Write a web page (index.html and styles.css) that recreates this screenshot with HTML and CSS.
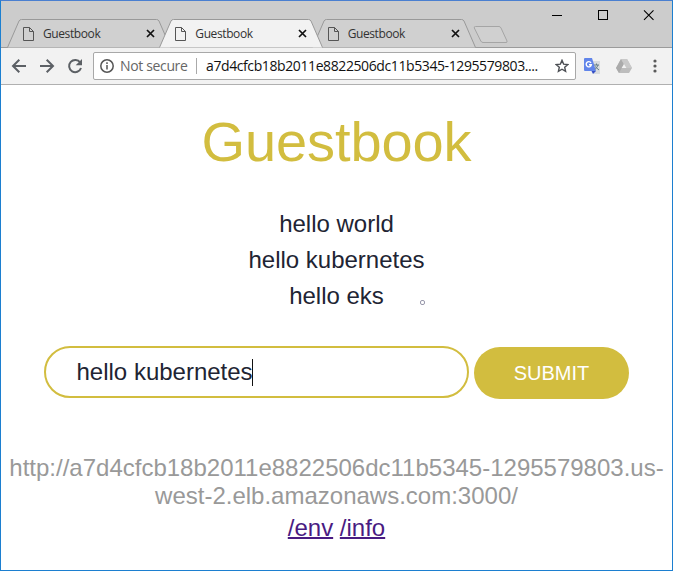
FILE: index.html
```html
<!DOCTYPE html>
<html lang="en">
<head>
<meta charset="utf-8">
<title>Guestbook</title>
<link rel="stylesheet" href="styles.css">
</head>
<body>
<div class="window">
  <header class="titlebar">
    <div class="tabs">
      <div class="tab">
        <svg class="tab-shape" width="166" height="29" viewBox="0 0 166 29"><path d="M0.5 28.5L12 2Q12.8.5 14.5.5H149.5Q151.2.5 152 2L163.5 28.5"/></svg>
        <svg class="page-icon" width="11" height="14" viewBox="0 0 11 14"><path d="M.5.5H6.5L10.5 4.5V13.5H.5ZM6.5.5V4.5H10.5"/></svg>
        <span class="tab-title">Guestbook</span>
        <svg class="tab-close" width="9" height="9" viewBox="0 0 9 9"><path d="M1 1L8 8M8 1L1 8"/></svg>
      </div>
      <div class="tab active">
        <svg class="tab-shape" width="166" height="29" viewBox="0 0 166 29"><path d="M0.5 28.5L12 2Q12.8.5 14.5.5H149.5Q151.2.5 152 2L163.5 28.5"/></svg>
        <svg class="page-icon" width="11" height="14" viewBox="0 0 11 14"><path d="M.5.5H6.5L10.5 4.5V13.5H.5ZM6.5.5V4.5H10.5"/></svg>
        <span class="tab-title">Guestbook</span>
        <svg class="tab-close" width="9" height="9" viewBox="0 0 9 9"><path d="M1 1L8 8M8 1L1 8"/></svg>
      </div>
      <div class="tab">
        <svg class="tab-shape" width="166" height="29" viewBox="0 0 166 29"><path d="M0.5 28.5L12 2Q12.8.5 14.5.5H149.5Q151.2.5 152 2L163.5 28.5"/></svg>
        <svg class="page-icon" width="11" height="14" viewBox="0 0 11 14"><path d="M.5.5H6.5L10.5 4.5V13.5H.5ZM6.5.5V4.5H10.5"/></svg>
        <span class="tab-title">Guestbook</span>
        <svg class="tab-close" width="9" height="9" viewBox="0 0 9 9"><path d="M1 1L8 8M8 1L1 8"/></svg>
      </div>
      <svg class="new-tab" width="36" height="18" viewBox="0 0 36 18"><path d="M2.5.5H26Q27.3.5 28 2L34 15Q34.5 16.5 33 16.5H10Q8.5 16.5 7.8 15L1.3 2Q.8.5 2.5.5Z"/></svg>
    </div>
    <svg class="window-controls" width="106" height="12" viewBox="0 0 106 12"><path d="M1 6.5H11M47.5 1.5H56.5V10.5H47.5Z" shape-rendering="crispEdges"/><path d="M93 1.3L102.5 10.8M102.5 1.3L93 10.8"/></svg>
  </header>
  <div class="toolbar">
    <svg class="nav-icon" width="16" height="16" viewBox="0 0 16 16"><path d="M15 8H2.5M8.3 1.7L2 8L8.3 14.3"/></svg>
    <svg class="nav-icon" width="16" height="16" viewBox="0 0 16 16"><path d="M1 8H13.5M7.7 1.7L14 8L7.7 14.3"/></svg>
    <svg class="nav-icon" width="16" height="16" viewBox="0 0 16 16"><path d="M13.2 4.5A6.1 6.1 0 1 0 14 10"/><path class="solid" d="M15 1V7.3H8.7Z"/></svg>
    <div class="address">
      <svg class="info" width="14" height="14" viewBox="0 0 14 14"><circle cx="7" cy="7" r="6.2"/><path d="M7 6V10.6M7 3.2V5"/></svg>
      <span class="security">Not secure</span>
      <span class="divider"></span>
      <span class="url">a7d4cfcb18b2011e8822506dc11b5345-1295579803....</span>
      <svg class="star" width="14" height="14" viewBox="0 0 14 14"><path d="M7 1.3L8.6 5.1L12.9 5.5L9.7 8.3L10.6 12.4L7 10.2L3.4 12.4L4.3 8.3L1.1 5.5L5.4 5.1Z"/></svg>
    </div>
    <svg class="translate" width="17" height="17" viewBox="0 0 17 17"><path fill="#d9dcde" d="M7 3H16V16H10Z"/><path fill="#6185ea" d="M1 0H8L12 13H1Q0 13 0 12V1Q0 0 1 0Z"/><path fill="#354ec4" d="M7.5 13H12L9 16Z"/><path fill="none" stroke="#fff" stroke-width="1.4" d="M7 4.8A2.6 2.6 0 1 0 7.4 6.7H5"/><path fill="none" stroke="#667f88" d="M10 7H15M12.5 5.5V7M14 7Q13 10 10.8 11.5M11 8.5L15 12"/></svg>
    <svg class="drive" width="16" height="14" viewBox="0 0 16 14"><path fill="#bdbdbd" d="M5 0H11L16 9L13 14H3L0 9Z"/><path fill="#ababab" d="M5 0L8 5L3 14L0 9Z"/><path fill="#c9c9c9" d="M5 0H11L16 9H10Z"/><path fill="#f2f2f2" d="M8 5L10.4 9H5.7Z"/></svg>
    <svg class="menu" width="4" height="14" viewBox="0 0 4 14"><circle cx="2" cy="2" r="1.6"/><circle cx="2" cy="7" r="1.6"/><circle cx="2" cy="12" r="1.6"/></svg>
  </div>
  <main class="page">
    <h1>Guestbook</h1>
    <div class="entries">
      <p>hello world</p>
      <p>hello kubernetes</p>
      <p>hello eks</p>
      <span class="pointer"></span>
    </div>
    <form class="guest-form">
      <div class="entry-field">hello kubernetes<span class="caret"></span></div>
      <button class="submit" type="button">SUBMIT</button>
    </form>
    <p class="host">http://a7d4cfcb18b2011e8822506dc11b5345-1295579803.us-<br>west-2.elb.amazonaws.com:3000/</p>
    <p class="links"><a href="#env">/env</a> <a href="#info">/info</a></p>
  </main>
</div>
</body>
</html>
```
FILE: styles.css
```css
* { box-sizing: border-box; }
body { margin: 0; background: #fff; }
svg { display: block; flex: none; fill: none; }
p, h1 { margin: 0; font-weight: 400; }

.window {
  width: 673px;
  height: 571px;
  border: 1px solid #1c7fd0;
  border-top-color: #4a7fd0;
  overflow: hidden;
  font-family: "Liberation Sans", Arial, sans-serif;
}

.titlebar {
  height: 47px;
  display: flex;
  justify-content: space-between;
  align-items: flex-start;
  background: #ccc;
  border-bottom: 1px solid #9b9b9b;
}
.tabs { display: flex; padding: 18px 0 0 6px; }
.tab {
  position: relative;
  width: 166px;
  height: 29px;
  margin-right: -13.7px;
  padding: 0 18px 0 16px;
  display: flex;
  align-items: center;
  flex: none;
}
.tab-shape { position: absolute; left: 0; top: 0; }
.tab-shape path { fill: #d0d0d0; stroke: #999; }
.active { z-index: 1; }
.active .tab-shape path { fill: #f2f2f2; }
.page-icon { position: relative; stroke: #555; }
.tab-title {
  position: relative;
  flex: 1;
  margin-left: 9px;
  font: 12px/16px "Open Sans", sans-serif;
  letter-spacing: -0.4px;
  color: #333;
}
.tab-close { position: relative; stroke: #111; stroke-width: 1.7; }
.new-tab { margin: 7px 0 0 9px; }
.new-tab path { fill: #d0d0d0; stroke: #a5a5a5; }
.window-controls { margin: 8px 15px 0 0; stroke: #000; stroke-width: 1.1; }

.toolbar {
  height: 37px;
  display: flex;
  align-items: center;
  padding: 0 15px 0 10px;
  background: #f2f2f2;
  border-bottom: 1px solid #b0b0b0;
}
.nav-icon { margin-right: 12px; stroke: #5c6065; stroke-width: 2; }
.solid { fill: #5c6065; stroke: none; }
.address {
  width: 483px;
  height: 28px;
  margin-left: -2px;
  padding: 0 6px;
  display: flex;
  align-items: center;
  background: #fff;
  border: 1px solid #a8a8a8;
  border-radius: 2px;
  font: 14px/20px "Open Sans", sans-serif;
  white-space: nowrap;
}
.info { stroke: #555; stroke-width: 1.5; }
.security { width: 69px; margin-left: 6px; color: #666; letter-spacing: -0.35px; }
.divider { width: 1px; height: 16px; margin: 0 9px 0 7px; background: #aaa; }
.url { flex: 1; color: #111; letter-spacing: -0.4px; }
.star { stroke: #4c4f54; stroke-width: 1.4; }
.translate { margin-left: 8px; }
.drive { margin-left: 15px; }
.menu { margin-left: auto; fill: #5a5a5a; }

.page { text-align: center; font-size: 24px; color: #212433; }
.page h1 { padding-top: 24px; font-size: 56px; line-height: 66px; letter-spacing: -0.1px; color: #d2bd3f; }
.entries { position: relative; padding-top: 31px; line-height: 36px; }
.pointer {
  position: absolute;
  left: 419px;
  top: 125px;
  width: 5px;
  height: 5px;
  border: 1px solid #9999ac;
  border-radius: 2px;
}
.guest-form { display: flex; padding: 32px 0 0 43px; }
.entry-field {
  width: 425px;
  height: 52px;
  padding-left: 30.5px;
  display: flex;
  align-items: center;
  border: 2px solid #d2bd3f;
  border-radius: 26px;
}
.caret { width: 1px; height: 27px; margin-left: -0.5px; background: #111; }
.submit {
  width: 155px;
  height: 52px;
  margin: 1px 0 0 5px;
  padding: 0;
  border: 0;
  border-radius: 26px;
  background: #d2bd3f;
  color: #fff;
  font: 20px/24px "Liberation Sans", Arial, sans-serif;
}
.host { padding-top: 55px; line-height: 28px; color: #999; white-space: nowrap; }
.links { line-height: 36px; }
.links a { color: #491b82; text-decoration-thickness: 2px; }
```
